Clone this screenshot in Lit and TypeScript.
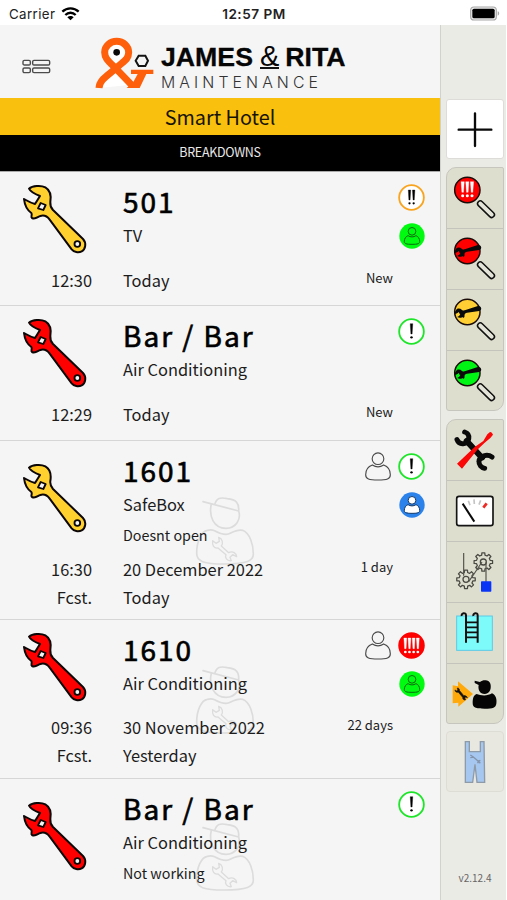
import { LitElement, html, css, svg, nothing } from "lit";
import { customElement, property } from "lit/decorators.js";

const WRENCH =
  "M88 48C98 39 124 37 137 44C151 52 155 70 152 88C151 96 153 104 160 112L250 199C261 211 258 229 246 236C236 241 223 238 216 230L150 141C142 130 132 127 122 130C114 132 108 141 97 136C92 132 99 127 95 121C81 111 75 97 73 79C82 84 93 91 106 94L121 70C110 66 94 60 88 48Z";

const DOUBLE_WRENCH =
  "M46 21C58 19 68 29 66 42L104 88C118 86 132 94 136 107L122 101L113 109L120 125C106 130 92 120 94 103L56 58C42 62 26 54 26 38L40 46L52 38Z";

type Priority = "low" | "mid" | "high";
type Assignee = "green" | "blue" | "";

interface Breakdown {
  place: string;
  kind: string;
  note?: string;
  color: string;
  lines: [string, string][];
  age: string;
  priority: Priority;
  person?: boolean;
  assignee: Assignee;
  worker?: boolean;
}

const BREAKDOWNS: Breakdown[] = [
  { place: "501", kind: "TV", color: "#ffd02e", lines: [["12:30", "Today"]], age: "New", priority: "mid", assignee: "green" },
  { place: "Bar / Bar", kind: "Air Conditioning", color: "#fe0000", lines: [["12:29", "Today"]], age: "New", priority: "low", assignee: "" },
  { place: "1601", kind: "SafeBox", note: "Doesnt open", color: "#ffd02e", lines: [["16:30", "20 December 2022"], ["Fcst.", "Today"]], age: "1 day", priority: "low", person: true, assignee: "blue", worker: true },
  { place: "1610", kind: "Air Conditioning", color: "#fe0000", lines: [["09:36", "30 November 2022"], ["Fcst.", "Yesterday"]], age: "22 days", priority: "high", person: true, assignee: "green", worker: true },
  { place: "Bar / Bar", kind: "Air Conditioning", note: "Not working", color: "#fe0000", lines: [["", ""]], age: "22 days", priority: "low", assignee: "", worker: true },
];

const bar = (x: number, top: number, base: number, w: number, fill: string) => svg`
  <path d="M${x - w} ${top}H${x + w}L${x + w * 0.5} ${base}H${x - w * 0.5}Z" fill=${fill} stroke=${fill} stroke-width="1" stroke-linejoin="round"></path>
  <circle cx=${x} cy=${base + 10} r=${w * 0.95} fill=${fill}></circle>`;

@customElement("breakdown-row")
class BreakdownRow extends LitElement {
  @property({ attribute: false }) item!: Breakdown;

  static styles = css`
    :host { display: block; position: relative; border-bottom: 1px solid #d6d6d6; background: #f5f5f5; }
    .top { display: flex; height: 93.5px; }
    .top.noted { height: 114px; }
    .tool { width: 123px; padding-left: 22px; box-sizing: border-box; display: flex; align-items: center; }
    .tool svg { display: block; }
    .what { flex: 1; padding-top: 11px; position: relative; z-index: 1; white-space: nowrap; }
    .place { font-size: 28px; line-height: 36px; letter-spacing: 2px; color: #000; -webkit-text-stroke: 0.65px #000; }
    .kind { font-size: 16.4px; line-height: 32px; }
    .note { font-size: 14.3px; line-height: 30px; }
    .marks { display: flex; flex-direction: column; align-items: flex-end; gap: 12px; padding: 12px 15px 0 0; }
    .line1 { display: flex; gap: 7px; align-items: center; height: 27px; }
    .marks svg { display: block; }
    .bottom { position: relative; z-index: 1; padding-bottom: 11.8px; }
    .bottom.two { padding-bottom: 9.4px; }
    .line { display: grid; grid-template-columns: 92px 1fr auto; column-gap: 31px; height: 28px; line-height: 28px; font-size: 16.4px; padding-right: 47px; }
    .line.second { height: 27px; }
    .time { text-align: right; }
    .age { font-size: 13px; line-height: 24px; }
    .worker { position: absolute; left: 194px; top: 50%; margin-top: -34px; display: block; }
  `;

  priority() {
    const p = this.item.priority;
    const ring = p === "low" ? "#1fe52a" : p === "mid" ? "#f9a41f" : "#fe0000";
    return html`<svg width="27" height="27" viewBox="0 0 81 81">
      <circle cx="40.5" cy="40.5" r="37" fill=${p === "high" ? "#fe0000" : "#fff"} stroke=${ring} stroke-width="5.5"></circle>
      ${p === "low" ? bar(40.5, 17, 48, 3.8, "#000") : nothing}
      ${p === "mid" ? [34.5, 47].map((x) => bar(x, 18, 48, 3.6, "#000")) : nothing}
      ${p === "high" ? [22, 34.5, 47, 59.5].map((x) => bar(x, 18, 50, 4.3, "#fff")) : nothing}
    </svg>`;
  }

  assignee() {
    const blue = this.item.assignee === "blue";
    return html`<svg width="26" height="26" viewBox="0 0 78 78">
      <circle cx="39" cy="39" r="38" fill=${blue ? "#2a82ea" : "#00fa10"}></circle>
      <g fill=${blue ? "#fff" : "none"} stroke=${blue ? "#173a66" : "#0a6a10"} stroke-width="3">
        <path d="M27 38C35 43 43 43 51 38C58 40 62 48 62 55C62 62 57 64 39 64C21 64 16 62 16 55C16 48 20 40 27 38Z"></path>
        <circle cx="39" cy="25" r="11.5"></circle>
      </g>
    </svg>`;
  }

  render() {
    const b = this.item;
    return html`
      ${b.worker
        ? html`<svg class="worker" width="62" height="69" viewBox="0 0 186 207" fill="none" stroke="#dcdcdc" stroke-width="5" stroke-linejoin="round" stroke-linecap="round">
            <path d="M27 17L134 45C136 20 126 11 100 8C78 3 68 6 62 26M52 24C44 60 58 96 96 97C126 96 142 70 134 45"></path>
            <path d="M62 104C80 114 96 120 110 111C124 104 134 100 146 103C168 112 178 146 178 174C178 194 160 204 92 204C28 204 8 196 8 172C8 136 22 106 40 103C48 101 54 101 62 104Z"></path>
            <path d="M56 134L66 142L76 136L74 124C86 128 88 142 82 150L104 170C116 164 128 172 128 182L116 176L108 184L112 194C98 196 92 184 96 176L72 156C60 158 54 148 56 134Z" stroke-width="4"></path>
          </svg>`
        : nothing}
      <div class="top ${b.note ? "noted" : ""}">
        <div class="tool">
          <svg width="66" height="70" viewBox="67 34 198 210">
            <path d=${WRENCH} fill=${b.color} stroke="#0c0606" stroke-width="6" stroke-linejoin="round"></path>
            <path d="M123 91L138 97L131 112L115 107Z" fill="#f5f5f5" stroke="#0c0606" stroke-width="5.5" stroke-linejoin="round"></path>
            <circle cx="233" cy="214" r="8.5" fill="#f5f5f5" stroke="#0c0606" stroke-width="5.5"></circle>
          </svg>
        </div>
        <div class="what">
          <div class="place">${b.place}</div>
          <div class="kind">${b.kind}</div>
          ${b.note ? html`<div class="note">${b.note}</div>` : nothing}
        </div>
        <div class="marks">
          <div class="line1">
            ${b.person
              ? html`<svg width="26" height="29" viewBox="0 0 78 87" fill="none" stroke="#4a4a4a" stroke-width="3.4">
                  <circle cx="39" cy="20" r="17.5"></circle>
                  <path d="M22 39C33 46 45 46 56 39C70 44 76 57 76 68C76 81 66 84 39 84C12 84 2 81 2 68C2 57 8 44 22 39Z"></path>
                </svg>`
              : nothing}
            ${this.priority()}
          </div>
          ${b.assignee ? this.assignee() : nothing}
        </div>
      </div>
      <div class="bottom ${b.lines.length > 1 ? "two" : ""}">
        ${b.lines.map(
          ([time, day], i) => html`<div class="line ${i ? "second" : ""}">
            <span class="time">${time}</span><span>${day}</span>${i ? nothing : html`<span class="age">${b.age}</span>`}
          </div>`
        )}
      </div>`;
  }
}

const gear = (cx: number, cy: number) => {
  let d = "";
  const teeth = 8;
  for (let i = 0; i < teeth; i++) {
    [[-0.3, 21], [-0.2, 28], [0.2, 28], [0.3, 21]].forEach(([o, r], k) => {
      const a = ((i + o) / teeth) * Math.PI * 2;
      d += `${i || k ? "L" : "M"}${(cx + Math.cos(a) * r).toFixed(1)} ${(cy + Math.sin(a) * r).toFixed(1)}`;
    });
  }
  return svg`<path d="${d}Z" fill="none" stroke="#4a4a44" stroke-width="3.8" stroke-linejoin="round"></path>
    <circle cx=${cx} cy=${cy} r="9" fill="none" stroke="#4a4a44" stroke-width="3.8"></circle>`;
};

const lens = (fill: string, mark: unknown) => svg`
  <circle cx="64" cy="69" r="38" fill=${fill} stroke="#1a0c08" stroke-width="4.5"></circle>
  ${mark}
  <path d="M103 110L137 143" stroke="#111" stroke-width="21" stroke-linecap="round"></path>
  <path d="M103 110L137 143" stroke="#e4e4d9" stroke-width="12" stroke-linecap="round"></path>`;

const lensWrench = svg`<g transform="translate(43 75) rotate(-62) scale(.33) translate(-112 -92)">
  <path d=${WRENCH} fill="#0a0a0a"></path></g>`;

const SEARCHES = [
  lens("#fe0000", svg`${[50, 64, 78].map((x) => bar(x, 44, 76, 4.8, "#fff"))}`),
  lens("#fe0000", lensWrench),
  lens("#ffcf33", lensWrench),
  lens("#00f514", lensWrench),
];

const TOOLS = [
  svg`<g fill="none" stroke="#0a0a0a" stroke-linecap="round">
      <path d="M62 66L108 116" stroke-width="18"></path>
      <path d="M56 39C76 46 70 73 52 74C43 75 36 70 33 62" stroke-width="15"></path>
      <path d="M138 114C124 104 100 110 99 127C98 138 106 146 116 148" stroke-width="15"></path>
    </g>
    <path d="M33 134L86 84L112 66L124 46L132 39Q138 38 141 47L133 57L116 71L94 92L48 149Z" fill="#fa0707"></path>`,
  svg`<rect x="32" y="49" width="109" height="88" rx="7" fill="#fff" stroke="#141414" stroke-width="5"></rect>
    <path d="M50 71L85 125" stroke="#0a0a0a" stroke-width="6"></path>
    <path d="M67 62L72 76M84 58L85 72M104 61L99 74" stroke="#c4c4c4" stroke-width="5"></path>
    <path d="M122 70L112 83" stroke="#ee2a24" stroke-width="8"></path>`,
  svg`${gear(112, 63)}${gear(60, 115)}
    <path d="M53 36V104M120 64V124M68 122L86 96L108 63" fill="none" stroke="#55554e" stroke-width="3.6"></path>
    <rect x="105" y="121" width="31" height="31" rx="2" fill="#0a35f5"></rect>`,
  svg`<rect x="32" y="42" width="107" height="103" fill="#7dfbfb" stroke="#5cc9e6" stroke-width="3"></rect>
    <path d="M47 42C45 32 60 30 60 40V122M82 42C80 32 95 30 95 40V122" fill="none" stroke="#111" stroke-width="6"></path>
    <path d="M60 61H95M60 76H95M60 91H95M60 106H95" stroke="#111" stroke-width="5"></path>`,
  svg`<path d="M20 67L36 70V55L81 93L37 131V119L20 121Z" fill="#ffa90a"></path>
    <path d=${DOUBLE_WRENCH} transform="translate(18 68) scale(.34)" fill="#111" stroke="#111" stroke-width="5"></path>
    <path d="M86 53L102 57C112 49 132 50 134 66C136 82 128 93 116 93C102 93 95 80 98 66L86 60Z" fill="#050505"></path>
    <path d="M92 93C104 98 124 100 138 91C150 96 153 110 151 122C149 134 142 137 116 137C88 137 80 134 80 120C80 106 83 96 92 93Z" fill="#050505"></path>`,
];

const OVERALLS = svg`<path d="M58 32H70V62H103V32H114L116 154H93L87 100L80 154H58Z" fill="#a6c7ef" stroke="#8f9aa8" stroke-width="4"></path>
  <path d="M73 72L82 78L97 91L103 97M73 80L82 78M95 97L97 91L103 88" fill="none" stroke="#8494aa" stroke-width="4"></path>`;

@customElement("side-bar")
class SideBar extends LitElement {
  static styles = css`
    :host { display: flex; flex-direction: column; box-sizing: border-box; width: 66px; border-left: 1px solid #d2d2cd; background: #ebebe5; padding: 74px 2px 0 5px; }
    .add { height: 60px; box-sizing: border-box; background: #fff; border: 1px solid #dddcd8; border-radius: 3px; }
    .group { margin-top: 8px; background: #dedecf; border: 1px solid #c6c6bf; border-radius: 10px 2px 10px 3px; box-sizing: border-box; overflow: hidden; }
    .cell { height: 60px; border-bottom: 1px solid #c4c4bc; }
    .cell:last-child { border-bottom: 0; height: 59px; }
    svg { display: block; margin-left: -1px; }
    .idle { height: 61px; box-sizing: border-box; margin-top: 7px; background: #e8e8e1; border: 1px solid #dddcd5; border-radius: 4px; }
    .version { margin-top: 79px; text-align: center; font-size: 10px; line-height: 14px; color: #666; }
  `;

  icon(content: unknown) {
    return html`<svg width="57" height="60" viewBox="0 3 171 180">${content}</svg>`;
  }

  render() {
    return html`
      <div class="add">${this.icon(svg`<path d="M38 92H136M87 43V141" stroke="#0a0a0a" stroke-width="7" stroke-linecap="round"></path>`)}</div>
      <div class="group">${SEARCHES.map((s) => html`<div class="cell">${this.icon(s)}</div>`)}</div>
      <div class="group">${TOOLS.map((s) => html`<div class="cell">${this.icon(s)}</div>`)}</div>
      <div class="idle">${this.icon(OVERALLS)}</div>
      <div class="version">v2.12.4</div>`;
  }
}

@customElement("app-root")
class AppRoot extends LitElement {
  static styles = css`
    :host { display: block; height: 900px; overflow: hidden; background: #fff; color: #1c1c1c; font-family: "Noto Sans CJK SC", "Open Sans", sans-serif; }
    .status { display: grid; grid-template-columns: 1fr auto 1fr; align-items: center; height: 25px; padding: 2px 7px 0 9px; box-sizing: border-box; font: 13.3px/22px Inter, sans-serif; color: #222; }
    .carrier { display: flex; align-items: center; gap: 6px; letter-spacing: 0.4px; }
    .clock { font-weight: 600; font-size: 13.6px; letter-spacing: 0.5px; margin-left: -1px; }
    .battery { justify-self: end; display: block; }
    .body { display: flex; height: 875px; }
    .main { width: 440px; background: #f5f5f5; overflow: hidden; }
    .head { display: flex; height: 73px; padding-left: 22px; }
    .menu { margin-top: 34px; display: block; }
    .logo { display: block; margin: 10px 0 0 43px; }
    .brand { margin: 17px 0 0 7px; font-family: "Liberation Sans", sans-serif; color: #060606; white-space: nowrap; }
    .name { display: flex; font-size: 26.7px; line-height: 30px; font-weight: 700; -webkit-text-stroke: 0.3px #060606; }
    .amp { font-weight: 400; margin: 0 6px 0 7px; border-bottom: 2px solid #111; height: 25px; font-size: 29px; line-height: 28px; -webkit-text-stroke: 0; }
    .sub { font-family: Inter, "Liberation Sans", sans-serif; font-weight: 300; font-size: 15.8px; line-height: 21px; letter-spacing: 4.1px; color: #333; }
    .hotel { height: 37px; line-height: 37.5px; background: #f9c00d; text-align: center; font-size: 19.8px; color: #161306; }
    .section { height: 37px; line-height: 34px; box-sizing: border-box; background: #000; border-bottom: 1px solid #aaa; color: #e8e8e8; text-align: center; font-size: 12.5px; letter-spacing: -0.3px; }
  `;

  render() {
    return html`
      <div class="status">
        <span class="carrier">Carrier
          <svg width="19" height="15" viewBox="0 0 57 45" fill="none" stroke="#000" stroke-width="7">
            <path d="M4 17C18 4 39 4 53 17M13 27C22 18 35 18 44 27"></path>
            <path d="M28.5 43L19 34C24 29 33 29 38 34Z" fill="#000" stroke="none"></path>
          </svg>
        </span>
        <span class="clock">12:57 PM</span>
        <svg class="battery" width="30" height="15" viewBox="0 0 90 45">
          <rect x="2" y="3" width="77" height="39" rx="10" fill="#eee" stroke="#a8a8a8" stroke-width="3.5"></rect>
          <rect x="7" y="8" width="67" height="29" rx="5" fill="#000"></rect>
          <path d="M83 16C89 18 89 27 83 29Z" fill="#a8a8a8"></path>
        </svg>
      </div>
      <div class="body">
        <div class="main">
          <div class="head">
            <svg class="menu" width="29" height="15" viewBox="0 0 87 45" fill="none" stroke="#4c4c4c" stroke-width="4.2">
              <rect x="3" y="4" width="22" height="14" rx="4"></rect><rect x="32" y="4" width="51" height="14" rx="4"></rect>
              <rect x="3" y="27" width="22" height="14" rx="4"></rect><rect x="32" y="27" width="51" height="14" rx="4"></rect>
            </svg>
            <svg class="logo" width="60" height="55" viewBox="282 105 180 165">
              <path d="M297 264C299 238 322 228 350 203C376 180 386 176 386 157A36 33 0 0 0 314 157C314 176 326 184 350 208L394 254" fill="#fff" stroke="#fe5f0a" stroke-width="21"></path>
              <path d="M393 209H460V222H439L419 264H380L400 246L413 222H393Z" fill="#fe5f0a"></path>
              <circle cx="350" cy="157" r="10" fill="#0a0a0a"></circle>
              <path d="M416 167H436L444 182L436 198H416L407 182Z" fill="none" stroke="#141414" stroke-width="6"></path>
            </svg>
            <div class="brand">
              <div class="name"><span>JAMES</span><span class="amp">&amp;</span><span>RITA</span></div>
              <div class="sub">MAINTENANCE</div>
            </div>
          </div>
          <div class="hotel">Smart Hotel</div>
          <div class="section">BREAKDOWNS</div>
          ${BREAKDOWNS.map((b) => html`<breakdown-row .item=${b}></breakdown-row>`)}
        </div>
        <side-bar></side-bar>
      </div>`;
  }
}
